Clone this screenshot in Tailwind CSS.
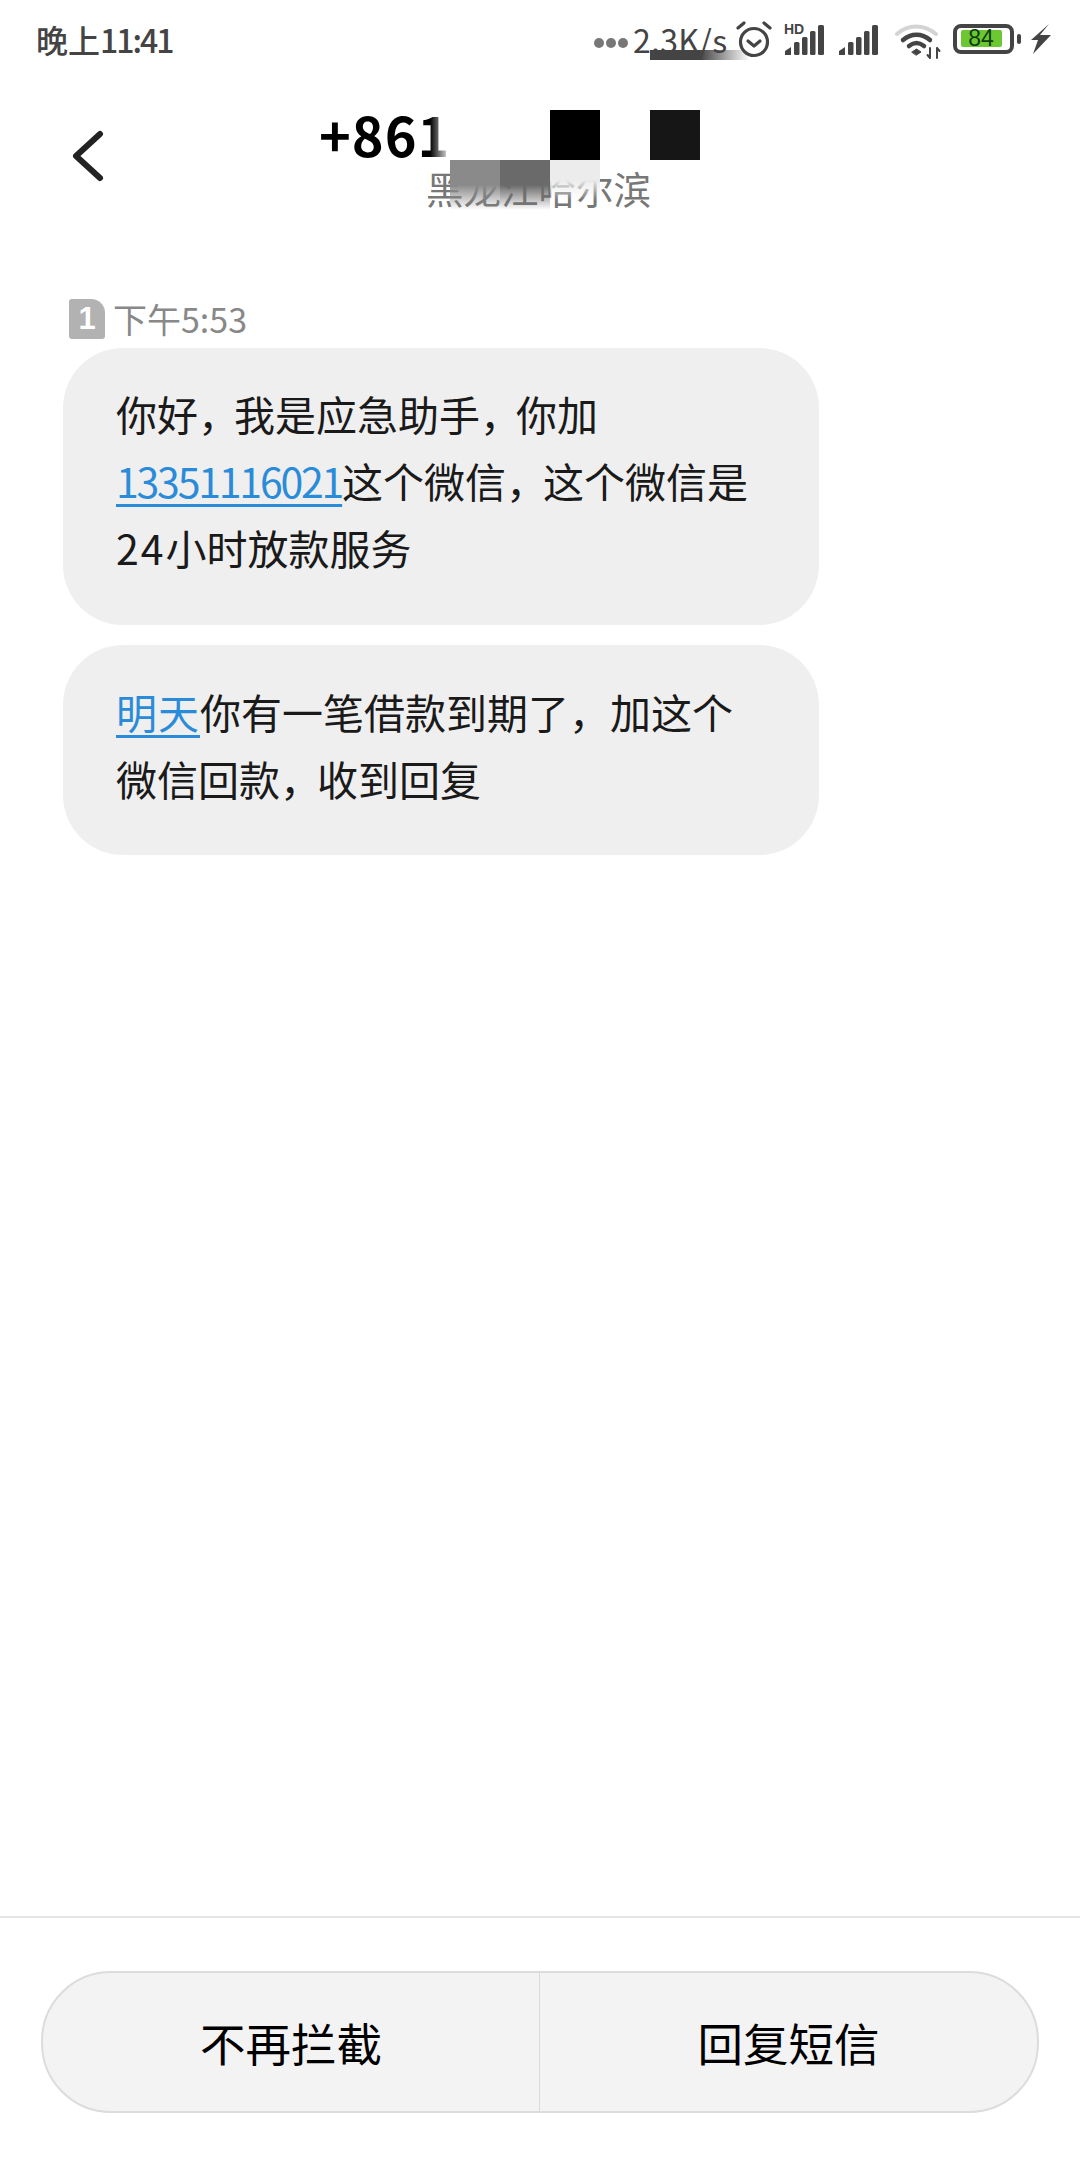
<!DOCTYPE html>
<html lang="zh-CN">
<head>
  <meta charset="UTF-8">
  <meta name="viewport" content="width=device-width, initial-scale=1">
  <title>短信</title>
  <script src="https://cdn.jsdelivr.net/npm/@tailwindcss/browser@4"></script>
</head>
<body class="bg-white font-['Noto_Sans_CJK_SC',sans-serif]">
  <div class="relative flex flex-col w-[1080px] h-[2160px] overflow-hidden">

    <!-- status bar -->
    <div class="flex items-center h-[78px] pl-[36px] text-[#444]">
      <div class="text-[32px] leading-none font-medium">晚上<span class="tracking-[-2px]">11:41</span></div>
      <div class="flex items-center ml-auto">
        <div class="flex gap-[2px] mt-[8px]">
          <span class="w-[10px] h-[10px] rounded-full bg-[#777]"></span>
          <span class="w-[10px] h-[10px] rounded-full bg-[#777]"></span>
          <span class="w-[10px] h-[10px] rounded-full bg-[#777]"></span>
        </div>
        <div class="w-[98px] ml-[5px] text-[32px] leading-none tracking-[0.3px] whitespace-nowrap">2.3K/s</div>
        <!-- alarm -->
        <svg class="ml-[5px]" width="36" height="38" viewBox="0 0 36 38" fill="none" stroke="#444" stroke-width="3.2" stroke-linecap="round" stroke-linejoin="round">
          <circle cx="18" cy="22" r="13.5"/>
          <path d="M12 21l6 5 6-5"/>
          <path d="M2 8l6-5M34 8l-6-5"/>
        </svg>
        <!-- hd signal -->
        <svg class="ml-[12px]" width="42" height="34" viewBox="0 0 42 34" fill="#444">
          <text x="0" y="12" font-size="14" font-weight="700" font-family="Liberation Sans">HD</text>
          <path d="M1 33v-4l6-4v8z"/>
          <rect x="10" y="20" width="5.5" height="13" rx="1.5"/>
          <rect x="18" y="15" width="5.5" height="18" rx="1.5"/>
          <rect x="26" y="9" width="5.5" height="24" rx="1.5"/>
          <rect x="34" y="3" width="6" height="30" rx="1.5"/>
        </svg>
        <!-- signal -->
        <svg class="ml-[13px]" width="41" height="34" viewBox="0 0 41 34" fill="#444">
          <path d="M0 33v-4l6-4v8z"/>
          <rect x="9" y="20" width="5.5" height="13" rx="1.5"/>
          <rect x="17" y="15" width="5.5" height="18" rx="1.5"/>
          <rect x="25" y="9" width="5.5" height="24" rx="1.5"/>
          <rect x="33" y="3" width="6" height="30" rx="1.5"/>
        </svg>
        <!-- wifi -->
        <svg class="ml-[15px] mt-[6px]" width="46" height="36" viewBox="0 0 46 36" fill="none" stroke-linecap="round">
          <path d="M2 10C13 0 29 0 41 10" stroke="#d4d4d4" stroke-width="4"/>
          <path d="M8 16C16 9 27 9 35 16" stroke="#444" stroke-width="4.5"/>
          <path d="M14 22C19 18 24 18 29 22" stroke="#444" stroke-width="4.5"/>
          <path d="M17 28l4.500-3 4.500 3-4.500 3z" fill="#444" stroke="#444" stroke-width="1"/>
          <path d="M35 24v10M35 34l-2.500-3M42 34V24M42 24l2.500 3" stroke="#444" stroke-width="2"/>
        </svg>
        <!-- battery -->
        <div class="relative flex items-center justify-center w-[61px] h-[30px] ml-[12px] mt-[-1px] rounded-[8px] border-[4px] border-[#444]">
          <div class="flex items-center justify-center w-[41px] h-[17px] mr-[5px] bg-[#6cc832] rounded-[2px] text-[23px] leading-none text-[#0e3d0e] font-['Liberation_Sans',sans-serif]">84</div>
        </div>
        <div class="w-[4px] h-[10px] ml-[3px] mt-[-1px] bg-[#444] rounded-[2px]"></div>
        <!-- bolt -->
        <svg class="ml-[10px] mr-[29px]" width="20" height="30" viewBox="0 0 20 30" fill="#444">
          <path d="M18 0L9 11h11L2 30l5-14H0z"/>
        </svg>
      </div>
    </div>

    <!-- smudge over the speed text -->
    <div class="absolute left-[650px] top-[50px] w-[100px] h-[10px] bg-linear-to-r from-[#444] via-[#444] to-white/0"></div>

    <!-- header -->
    <div class="relative h-[211px]">
      <svg class="absolute left-[72px] top-[52px]" width="34" height="52" viewBox="0 0 34 52" fill="none" stroke="#222" stroke-width="6" stroke-linecap="round" stroke-linejoin="round">
        <path d="M28 4L4 26l24 22"/>
      </svg>
      <div class="pl-[319px] pt-[22px] h-[68px] text-[54px] leading-[68px] font-bold tracking-[1px] text-black">+8613</div>
      <div class="pl-[426px] pt-[19px] text-[37.500px] leading-[46px] text-[#777]">黑龙江哈尔滨</div>

      <!-- mosaic covering the number -->
      <div class="absolute left-[430px] top-[30px] w-[60px] h-[52px] bg-linear-to-r from-white/0 to-white to-35%"></div>
      <div class="absolute left-[450px] top-[82px] w-[50px] h-[50px] bg-linear-to-b from-[#8a8a8a] via-[#8a8a8a] to-white/0"></div>
      <div class="absolute left-[500px] top-[82px] w-[50px] h-[50px] bg-linear-to-b from-[#6a6a6a] via-[#6a6a6a] to-white/0"></div>
      <div class="absolute left-[550px] top-[82px] w-[50px] h-[40px] bg-linear-to-b from-[#ececec] via-[#ececec] to-white/0"></div>
      <div class="absolute left-[550px] top-[32px] w-[50px] h-[50px] bg-black"></div>
      <div class="absolute left-[650px] top-[32px] w-[50px] h-[50px] bg-[#161616]"></div>
    </div>

    <!-- messages -->
    <div class="flex flex-col pl-[63px] w-[819px]">
      <div class="flex items-center gap-[8px] h-[59px] pl-[6px]">
        <div class="flex items-center justify-center w-[36px] h-[40px] bg-[#b2b2b2] rounded-[3px] rounded-tr-[14px] text-white text-[31px] leading-none font-bold font-['Liberation_Sans',sans-serif]">1</div>
        <div class="text-[34px] leading-none text-[#888]">下午5:53</div>
      </div>
      <div class="mb-[20px] px-[53px] pt-[32px] pb-[44px] bg-[#efefef] rounded-[60px] text-[41px] leading-[67px] text-[#1a1a1a] whitespace-nowrap">
        你好<span class="tracking-[-5px]">，</span>我是应急助手<span class="tracking-[-5px]">，</span>你加<br>
        <span class="text-[#2a8cd8] underline underline-offset-[6px] decoration-[3px] tracking-[-2.200px]">13351116021</span>这个微信<span class="tracking-[-4px]">，</span>这个微信是<br>
        <span class="tracking-[2px]">24</span>小时放款服务
      </div>
      <div class="px-[53px] pt-[33px] pb-[43px] bg-[#efefef] rounded-[60px] text-[41px] leading-[67px] text-[#1a1a1a] whitespace-nowrap">
        <span class="text-[#2a8cd8] underline underline-offset-[6px] decoration-[3px] tracking-[1px]">明天</span>你有一笔借款到期了，加这个<br>
        微信回款<span class="tracking-[-4px]">，</span>收到回复
      </div>
    </div>

    <!-- footer -->
    <div class="mt-auto h-[244px] pt-[53px] border-t-2 border-[#e6e6e6]">
      <div class="flex mx-[41px] h-[142px] bg-[#f3f3f3] border-2 border-[#dcdcdc] rounded-[70px] text-[45.500px] text-black">
        <div class="flex items-center justify-center shrink-0 w-[497px] border-r border-[#dadada]">不再拦截</div>
        <div class="flex items-center justify-center flex-1">回复短信</div>
      </div>
    </div>

  </div>
</body>
</html>
